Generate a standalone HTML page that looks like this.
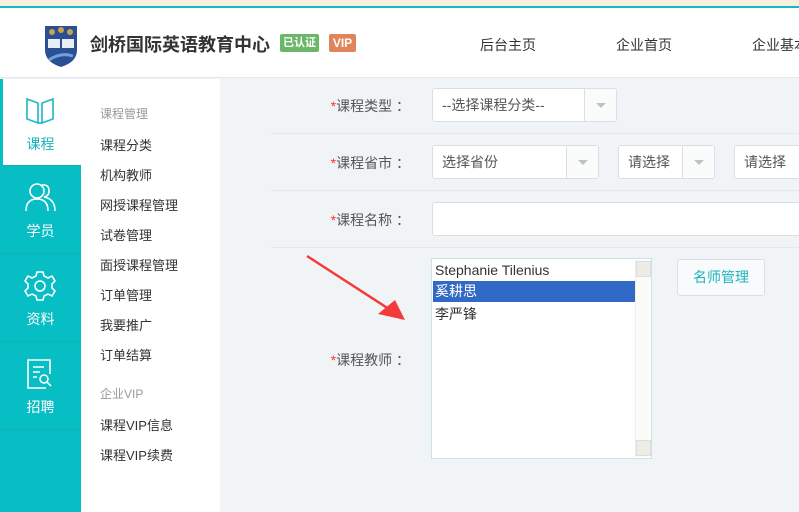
<!DOCTYPE html>
<html><head><meta charset="utf-8"><style>
*{margin:0;padding:0;box-sizing:border-box}
body{width:799px;height:512px;overflow:hidden;background:#f0f4f7;font-family:"Liberation Sans","Noto Sans CJK SC",sans-serif;position:relative;font-size:13px;color:#333}
.a{position:absolute}
.top{left:0;top:0;width:799px;height:6px;background:#f7efe0}
.tl{left:0;top:6px;width:799px;height:2px;background:#16b8c2}
.hd{left:0;top:8px;width:799px;height:70px;background:#fff;border-bottom:1px solid #e3e8ec}
.side{left:0;top:79px;width:81px;height:433px;background:#07bec4}
.sub{left:81px;top:79px;width:139px;height:433px;background:#fff}
.it{left:0;width:81px;height:88px;color:#fff;text-align:center;font-size:14px;border-bottom:1px solid #15b0b6}
.it span{position:absolute;left:0;width:81px;top:55px}
.it svg{position:absolute;left:24px;top:16px}
.sm{left:100px;font-size:13px;color:#333}
.sg{color:#999;font-size:12px}
.lab{font-size:14px;color:#555;text-align:right;width:150px;left:260px}
.lab b{color:#f33;font-weight:normal}
.sel{background:#fff;border:1px solid #dcdfe2;border-radius:3px;height:34px;color:#555;font-size:14px;line-height:32px;padding-left:9px;overflow:hidden;white-space:nowrap}
.sel i{position:absolute;right:0;top:0;width:32px;height:32px;border-left:1px solid #dcdfe2;background:#fafbfb}
.sel i:after{content:"";position:absolute;left:11px;top:14px;border-left:5px solid transparent;border-right:5px solid transparent;border-top:5px solid #bcc3c6}
.ln{left:271px;height:1px;width:528px;background:#e3e8ec}
</style></head><body>
<div class="a top"></div><div class="a tl"></div>
<div class="a hd">
 <svg class="a" style="left:41px;top:14px" width="40" height="46" viewBox="0 0 40 46"><rect width="40" height="46" fill="#fff"/><path d="M4 4H36V28Q36 40 20 45Q4 40 4 28Z" fill="#2b4f93"/><circle cx="11" cy="10" r="3" fill="#c9a24b"/><circle cx="20" cy="8" r="3" fill="#c9a24b"/><circle cx="29" cy="10" r="3" fill="#c9a24b"/><rect x="7" y="17" width="12" height="9" fill="#e8eef7"/><rect x="21" y="17" width="12" height="9" fill="#e8eef7"/><path d="M8 38Q20 30 32 34" stroke="#6fa2d8" stroke-width="3" fill="none"/></svg>
 <div class="a" style="left:90px;top:23px;font-size:18px;font-weight:bold;color:#333">剑桥国际英语教育中心</div>
 <div class="a" style="left:280px;top:26px;width:39px;height:18px;background:#6bb76a;color:#fff;font-size:11px;font-weight:bold;line-height:18px;text-align:center;border-radius:2px">已认证</div>
 <div class="a" style="left:329px;top:26px;width:27px;height:18px;background:#e0845a;color:#fff;font-size:12px;font-weight:bold;line-height:18px;text-align:center;border-radius:2px">VIP</div>
 <div class="a" style="left:480px;top:27px;font-size:14px;color:#333">后台主页</div>
 <div class="a" style="left:616px;top:27px;font-size:14px;color:#333">企业首页</div>
 <div class="a" style="left:752px;top:27px;font-size:14px;color:#333;white-space:nowrap">企业基本</div>
</div>
<div class="a side"></div>
<div class="a it" style="top:79px;background:#fff;border-left:3px solid #07bec4;color:#18b4bd;height:87px"><svg style="left:21px" width="32" height="30" viewBox="0 0 32 30" fill="none" stroke="#18b9c2" stroke-width="1.6"><path d="M3 4L14 8V28L3 24Z"/><path d="M29 4L18 8V28L29 24Z"/><path d="M14 28H18"/></svg><span style="left:-3px">课程</span></div>
<div class="a it" style="top:166px"><svg width="34" height="30" viewBox="0 0 34 30" fill="none" stroke="#fff" stroke-width="1.6"><circle cx="13" cy="9" r="7"/><path d="M2 29Q2 17 13 17Q24 17 24 29"/><path d="M18 3Q25 2 25 9Q25 14 20 15Q31 17 31 29"/></svg><span>学员</span></div>
<div class="a it" style="top:254px"><svg width="32" height="32" viewBox="0 0 32 32" fill="none" stroke="#fff" stroke-width="1.6"><path d="M13 2H19L20 6L24 8L28 6L31 11L28 14V18L31 21L28 26L24 24L20 26L19 30H13L12 26L8 24L4 26L1 21L4 18V14L1 11L4 6L8 8L12 6Z"/><circle cx="16" cy="16" r="5"/></svg><span>资料</span></div>
<div class="a it" style="top:342px"><svg width="32" height="32" viewBox="0 0 32 32" fill="none" stroke="#fff" stroke-width="1.6"><path d="M22 30H4V2H26V16"/><path d="M9 9H20M9 14H16M9 19H13"/><circle cx="20" cy="21" r="4"/><path d="M23 24L27 28"/></svg><span>招聘</span></div>
<div class="a sub"></div>
<div class="a sm sg" style="top:105px">课程管理</div>
<div class="a sm" style="top:135px">课程分类</div>
<div class="a sm" style="top:165px">机构教师</div>
<div class="a sm" style="top:195px">网授课程管理</div>
<div class="a sm" style="top:225px">试卷管理</div>
<div class="a sm" style="top:255px">面授课程管理</div>
<div class="a sm" style="top:285px">订单管理</div>
<div class="a sm" style="top:315px">我要推广</div>
<div class="a sm" style="top:345px">订单结算</div>
<div class="a sm sg" style="top:385px">企业VIP</div>
<div class="a sm" style="top:415px">课程VIP信息</div>
<div class="a sm" style="top:445px">课程VIP续费</div>

<div class="a lab" style="top:96px"><b>*</b>课程类型 ：</div>
<div class="a sel" style="left:432px;top:88px;width:185px">--选择课程分类--<i></i></div>
<div class="a ln" style="top:133px"></div>
<div class="a lab" style="top:153px"><b>*</b>课程省市 ：</div>
<div class="a sel" style="left:432px;top:145px;width:167px">选择省份<i></i></div>
<div class="a sel" style="left:618px;top:145px;width:97px">请选择<i></i></div>
<div class="a sel" style="left:734px;top:145px;width:100px">请选择<i style="right:0"></i></div>
<div class="a ln" style="top:190px"></div>
<div class="a lab" style="top:210px"><b>*</b>课程名称 ：</div>
<div class="a sel" style="left:432px;top:202px;width:380px"></div>
<div class="a ln" style="top:247px"></div>
<div class="a lab" style="top:350px"><b>*</b>课程教师 ：</div>
<div class="a" style="left:431px;top:258px;width:221px;height:201px;border:1px solid #c9e3e6;background:#fff">
 <div class="a" style="left:3px;top:3px;font-size:14px;color:#333">Stephanie Tilenius</div>
 <div class="a" style="left:1px;top:22px;width:202px;height:21px;background:#3169c6;color:#fff;font-size:14px;line-height:21px;padding-left:2px">奚耕思</div>
 <div class="a" style="left:3px;top:45px;font-size:14px;color:#333">李严锋</div>
 <div class="a" style="left:203px;top:1px;width:16px;height:197px;background:#fbfbf7;border-left:1px solid #eee"><div class="a" style="left:0;top:1px;width:15px;height:16px;background:#eeede5;border:1px solid #ddd"></div><div class="a" style="left:0;bottom:1px;width:15px;height:16px;background:#eeede5;border:1px solid #ddd"></div></div>
</div>
<div class="a" style="left:677px;top:259px;width:88px;height:37px;border:1px solid #dcdfe2;border-radius:3px;background:#f8fafb;color:#1cb5bf;font-size:14px;text-align:center;line-height:35px">名师管理</div>
<svg class="a" style="left:300px;top:250px" width="110" height="80" viewBox="0 0 110 80"><path d="M7 6L92 61" stroke="#f43a3a" stroke-width="2.5"/><path d="M105 70L78 64L95 50Z" fill="#f43a3a"/></svg>
</body></html>
